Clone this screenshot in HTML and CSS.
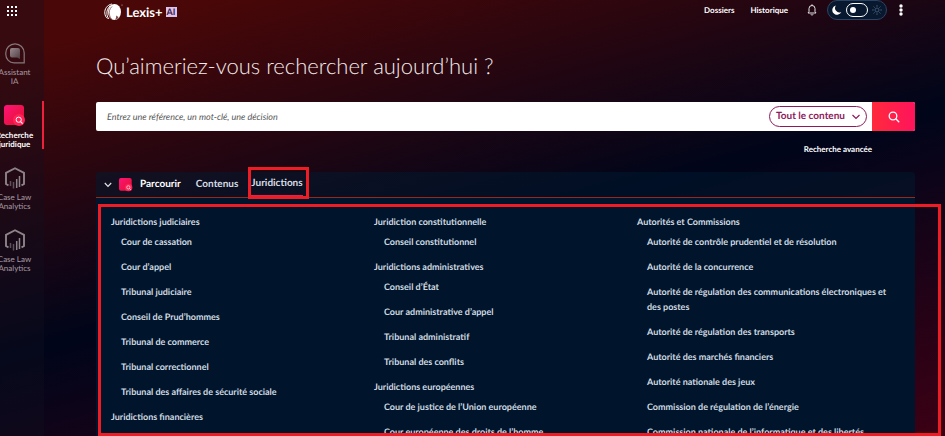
FILE: index.html
```html
<!DOCTYPE html>
<html lang="fr">
<head>
  <meta charset="utf-8">
  <meta name="viewport" content="width=device-width, initial-scale=1">
  <title>Lexis+ AI</title>
  <link rel="stylesheet" href="styles.css">
</head>
<body>
  <svg class="defs" width="0" height="0" aria-hidden="true">
    <defs>
      <linearGradient id="pink" x1="0" y1="0" x2="1" y2="1">
        <stop offset="0" stop-color="#ff1478"/>
        <stop offset="1" stop-color="#e0102c"/>
      </linearGradient>
      <linearGradient id="grey" x1="0" y1="0" x2="1" y2="1">
        <stop offset="0" stop-color="#9a8a8e"/>
        <stop offset="1" stop-color="#4d3c42"/>
      </linearGradient>
      <symbol id="search-tile" viewBox="0 0 22 22">
        <rect x="0" y="0" width="20" height="20" rx="3" fill="url(#pink)"/>
        <circle cx="15" cy="15" r="6" fill="#ff2258"/>
        <circle cx="14.7" cy="14.7" r="2.6" fill="none" stroke="#fff" stroke-width="1"/>
        <path d="M16.6 16.6l2 2" stroke="#fff" stroke-width="1.1"/>
      </symbol>
      <symbol id="cube" viewBox="0 0 20 22">
        <path d="M3.500 18.300L1 17V5.800L10 1.200l9 4.600V17l-2.500 1.300" fill="none" stroke="#8d8389" stroke-width="1.900"/>
        <path d="M5.500 14v5M8.500 15v6.500" stroke="#5d5259" stroke-width="1.500"/>
        <path d="M11.700 12v9M14.500 9v11" stroke="#8d8389" stroke-width="1.500"/>
      </symbol>
    </defs>
  </svg>

  <nav class="sidebar">
    <button class="apps" aria-label="Applications">
      <svg width="12" height="12" viewBox="0 0 12 12" fill="#fff">
        <rect x="0" y="0" width="2" height="2"/><rect x="4" y="0" width="2" height="2"/><rect x="8" y="0" width="2" height="2"/>
        <rect x="0" y="4" width="2" height="2"/><rect x="4" y="4" width="2" height="2"/><rect x="8" y="4" width="2" height="2"/>
        <rect x="0" y="8" width="2" height="2"/><rect x="4" y="8" width="2" height="2"/><rect x="8" y="8" width="2" height="2"/>
      </svg>
    </button>
    <a class="side-item" href="#">
      <svg width="20" height="21" viewBox="0 0 20 21">
        <path d="M10 .8a9.200 9.200 0 0 1 9.200 9.200v9.800H9A8.200 8.200 0 0 1 .8 11.600V10A9.200 9.200 0 0 1 10 .8z" fill="none" stroke="#85777b" stroke-width="1.200"/>
        <path d="M7 5h6a2 2 0 0 1 2 2v9l-3-1.500H7a2 2 0 0 1-2-2V7a2 2 0 0 1 2-2z" fill="url(#grey)"/>
      </svg>
      <span>Assistant<br>IA</span>
    </a>
    <a class="side-item active" href="#">
      <svg width="22" height="22"><use href="#search-tile"/></svg>
      <span>Recherche<br>juridique</span>
    </a>
    <a class="side-item" href="#">
      <svg width="20" height="22"><use href="#cube"/></svg>
      <span>Case Law<br>Analytics</span>
    </a>
    <a class="side-item" href="#">
      <svg width="20" height="22"><use href="#cube"/></svg>
      <span>Case Law<br>Analytics</span>
    </a>
  </nav>

  <div class="page">
    <header class="topbar">
      <a class="logo" href="#">
        <svg width="19" height="18" viewBox="0 0 19 18">
          <ellipse cx="10.500" cy="9" rx="6.500" ry="8" fill="#fff"/>
          <path d="M8 1C3 2 .5 6 .8 10c.2 2.500 1.200 4.500 2.700 5.500M6.500 2.500C3.500 5 2.500 8 3 11.500c.3 2 1 3.500 2 4.500" fill="none" stroke="#fff" stroke-width="1"/>
          <path d="M8 3.500C5.500 5.500 4.800 9 5.500 12c.3 1.600 1 3 2 4" fill="none" stroke="#6b3030" stroke-width=".7"/>
          <path d="M10.500 16.800c1.500-1 2-2.500 1.500-4.300l2.500 1.500c-.5 1.700-2 2.800-4 2.800z" fill="#7a4a4a"/>
          <circle cx="18" cy="2" r=".6" fill="#bbb"/>
        </svg>
        <span>Lexis+</span>
        <span class="ai">AI</span>
      </a>
      <div class="tools">
        <a href="#">Dossiers</a>
        <a href="#">Historique</a>
        <button class="bell" aria-label="Notifications">
          <svg width="10" height="12" viewBox="0 0 10 12" fill="none" stroke="#e6e3e6" stroke-width="1">
            <path d="M1 9h8L8 7.500V4.500a3 3 0 0 0-6 0v3zM5 .3v1.400M3.800 10.300c.3 1 2.100 1 2.400 0"/>
          </svg>
        </button>
        <button class="theme" aria-label="Thème sombre">
          <svg width="10" height="10" viewBox="0 0 10 10"><path d="M4 .5A4.700 4.700 0 1 0 9.300 7 4.300 4.300 0 0 1 4 .5z" fill="#fff"/></svg>
          <span class="switch"></span>
          <svg width="10" height="10" viewBox="0 0 10 10" fill="none" stroke="#40536f" stroke-width="1">
            <circle cx="5" cy="5" r="2"/>
            <path d="M5 0v1.800M5 8.200V10M0 5h1.800M8.200 5H10M1.500 1.500l1.200 1.200M7.300 7.300l1.200 1.200M1.500 8.500l1.200-1.200M7.300 2.700l1.200-1.200"/>
          </svg>
        </button>
        <button class="more" aria-label="Plus">
          <svg width="4" height="12" viewBox="0 0 4 12" fill="#fff"><circle cx="2" cy="2" r="1.700"/><circle cx="2" cy="6" r="1.700"/><circle cx="2" cy="10" r="1.700"/></svg>
        </button>
      </div>
    </header>

    <main class="content">
      <h1>Qu’aimeriez-vous rechercher aujourd’hui ?</h1>
      <form class="search">
        <input type="text" aria-label="Recherche" placeholder="Entrez une référence, un mot-clé, une décision">
        <button class="scope" type="button">
          <span>Tout le contenu</span>
          <svg width="8" height="6" viewBox="0 0 8 6" fill="none" stroke="#8e1a5c" stroke-width="1.200"><path d="M.5 1L4 4.500 7.500 1"/></svg>
        </button>
        <button class="submit" type="submit" aria-label="Rechercher">
          <svg width="12" height="12" viewBox="0 0 12 12" fill="none" stroke="#fff" stroke-width="1.300"><circle cx="5" cy="5" r="3.800"/><path d="M7.800 7.800l3.400 3.400"/></svg>
        </button>
      </form>
      <a class="advanced" href="#">Recherche avancée</a>

      <section class="browse">
        <div class="tabs">
          <svg class="chevron" width="8" height="6" viewBox="0 0 8 6" fill="none" stroke="#e0e4ea" stroke-width="1.200"><path d="M.8 1L4 4.300 7.200 1"/></svg>
          <svg class="tile" width="14" height="14"><use href="#search-tile"/></svg>
          <h2>Parcourir</h2>
          <button class="tab">Contenus</button>
          <button class="tab selected">Juridictions</button>
        </div>
        <div class="panel">
          <div class="columns">
            <div class="column">
              <h3>Juridictions judiciaires</h3>
              <ul>
                <li><a href="#">Cour de cassation</a></li>
                <li><a href="#">Cour d’appel</a></li>
                <li><a href="#">Tribunal judiciaire</a></li>
                <li><a href="#">Conseil de Prud’hommes</a></li>
                <li><a href="#">Tribunal de commerce</a></li>
                <li><a href="#">Tribunal correctionnel</a></li>
                <li><a href="#">Tribunal des affaires de sécurité sociale</a></li>
              </ul>
              <h3>Juridictions financières</h3>
              <ul>
                <li><a href="#">Cour des comptes</a></li>
              </ul>
            </div>
            <div class="column">
              <h3>Juridiction constitutionnelle</h3>
              <ul>
                <li><a href="#">Conseil constitutionnel</a></li>
              </ul>
              <h3>Juridictions administratives</h3>
              <ul>
                <li><a href="#">Conseil d’État</a></li>
                <li><a href="#">Cour administrative d’appel</a></li>
                <li><a href="#">Tribunal administratif</a></li>
                <li><a href="#">Tribunal des conflits</a></li>
              </ul>
              <h3>Juridictions européennes</h3>
              <ul>
                <li><a href="#">Cour de justice de l’Union européenne</a></li>
                <li><a href="#">Cour européenne des droits de l’homme</a></li>
              </ul>
            </div>
            <div class="column">
              <h3>Autorités et Commissions</h3>
              <ul>
                <li><a href="#">Autorité de contrôle prudentiel et de résolution</a></li>
                <li><a href="#">Autorité de la concurrence</a></li>
                <li><a href="#">Autorité de régulation des communications électroniques et des postes</a></li>
                <li><a href="#">Autorité de régulation des transports</a></li>
                <li><a href="#">Autorité des marchés financiers</a></li>
                <li><a href="#">Autorité nationale des jeux</a></li>
                <li><a href="#">Commission de régulation de l’énergie</a></li>
                <li><a href="#">Commission nationale de l’informatique et des libertés</a></li>
              </ul>
            </div>
          </div>
        </div>
      </section>
    </main>
  </div>
</body>
</html>
```
FILE: styles.css
```css
* { box-sizing: border-box; }
body {
    margin: 0;
    height: 100vh;
    display: flex;
    overflow: hidden;
    font-family: Lato, sans-serif;
    font-size: 10px;
    line-height: 15px;
    text-rendering: geometricPrecision;
    color: #fff;
    background: linear-gradient(165deg, #4a0707 8%, #00051a 52%, #3c0014 100%);
}
.defs { position: absolute; }
a {
    color: inherit;
    text-decoration: none;
}
button {
    padding: 0;
    border: 0;
    background: none;
    font: inherit;
    color: inherit;
    text-rendering: inherit;
}
svg {
    display: block;
    flex: none;
}
h1, h2, h3, ul {
    margin: 0;
    padding: 0;
}

/* left rail */
.sidebar {
    flex: none;
    width: 44px;
    padding-top: 6px;
    background-color: rgba(16, 16, 32, 0.35);
}
.apps {
    display: block;
    margin: 0 0 25px 7px;
}
.side-item {
    display: flex;
    flex-direction: column;
    align-items: center;
    gap: 4px;
    width: 29px;
    height: 62px;
    font-size: 8px;
    line-height: 9px;
    text-align: center;
    color: #a79ba2;
}
.side-item span { white-space: nowrap; }
.side-item.active {
    width: 44px;
    height: 48px;
    margin: -4px 0 18px;
    padding: 4px 13px 0 0;
    border-right: 2px solid #f0203c;
    font-weight: bold;
    color: #fff;
}

/* top bar */
.page {
    flex: 1;
    min-width: 0;
    display: flex;
    flex-direction: column;
}
.topbar {
    display: flex;
    justify-content: space-between;
    padding: 0 42px 0 60px;
    height: 24px;
}
.logo {
    display: flex;
    align-items: center;
    gap: 3px;
    font-size: 13px;
    font-weight: bold;
}
.ai {
    padding: 0 1px;
    font-size: 9px;
    line-height: 10px;
    color: #3b1b4a;
    background-color: #dcc4ee;
}
.tools {
    display: flex;
    align-items: center;
    gap: 16px;
    height: 20px;
    font-size: 8px;
    font-weight: bold;
}
.theme {
    display: flex;
    align-items: center;
    justify-content: center;
    gap: 4px;
    width: 60px;
    height: 20px;
    border: 1px solid #2b4464;
    border-radius: 10px;
    background-color: #08192f;
}
.bell { margin: 0 -6px 0 3px; }
.more { margin-left: -4px; }
.switch {
    width: 22px;
    height: 14px;
    padding: 3px;
    border: 1px solid #fff;
    border-radius: 7px;
}
.switch::before {
    content: "";
    display: block;
    width: 6px;
    height: 6px;
    border-radius: 50%;
    background-color: #fff;
}

/* search */
.content {
    flex: 1;
    min-height: 0;
    display: flex;
    flex-direction: column;
    padding: 26px 30px 0 52px;
}
h1 {
    font-size: 22px;
    line-height: 32px;
    font-weight: 300;
    color: #f3ecec;
}
.search {
    display: flex;
    align-items: center;
    height: 29px;
    margin-top: 20px;
    border-radius: 2px;
    background-color: #fff;
}
.search input {
    flex: 1;
    min-width: 0;
    border: 0;
    padding: 0 11px;
    background: none;
    font: italic 9px Lato, sans-serif;
    text-rendering: inherit;
}
.search input::placeholder { color: #555; }
.scope {
    display: flex;
    align-items: center;
    justify-content: center;
    gap: 7px;
    width: 98px;
    height: 21px;
    margin-right: 5px;
    border: 1px solid #8e1a5c;
    border-radius: 11px;
    font-weight: bold;
    color: #8e1a5c;
}
.submit {
    display: flex;
    align-items: center;
    justify-content: center;
    width: 43px;
    height: 29px;
    border-radius: 0 2px 2px 0;
    background: linear-gradient(90deg, #ff2a3c, #ff145c);
}
.advanced {
    align-self: flex-end;
    margin: 11px 43px 15px 0;
    font-size: 8px;
    font-weight: bold;
}

/* browse panel */
.browse {
    flex: 1;
    min-height: 0;
    display: flex;
    flex-direction: column;
}
.tabs {
    display: flex;
    align-items: center;
    height: 26px;
    padding-left: 8px;
    border-bottom: 1px solid #96281c;
    border-radius: 3px 3px 0 0;
    background-color: rgba(0, 26, 48, 0.5);
}
.tile { margin: 0 7px; }
h2 {
    margin-right: 15px;
    font-size: 10px;
    font-weight: bold;
}
.tab {
    margin-right: 13px;
    font-weight: bold;
    color: #d6dce4;
}
.tab.selected {
    position: relative;
    z-index: 1;
    align-self: stretch;
    border-bottom: 2px solid #e8204a;
}
.tab.selected::after {
    content: "";
    position: absolute;
    inset: -5px -6px -4px -3px;
    border: 3px solid #ee1c24;
}
.panel {
    position: relative;
    flex: 1;
    min-height: 0;
    background-color: #00152b;
}
.panel::after {
    content: "";
    position: absolute;
    inset: 6px -26px 0 2px;
    border: 3px solid #ee1c24;
}
.columns {
    display: grid;
    grid-template-columns: repeat(3, 1fr);
    height: 100%;
    padding: 16px 15px 0;
    overflow: hidden;
    font-size: 9px;
    font-weight: bold;
    color: #d2dbe2;
}
h3 {
    margin-bottom: 5px;
    font-size: 9px;
}
ul {
    padding: 0 8px 0 10px;
    list-style: none;
}
li { margin-bottom: 10px; }
```
